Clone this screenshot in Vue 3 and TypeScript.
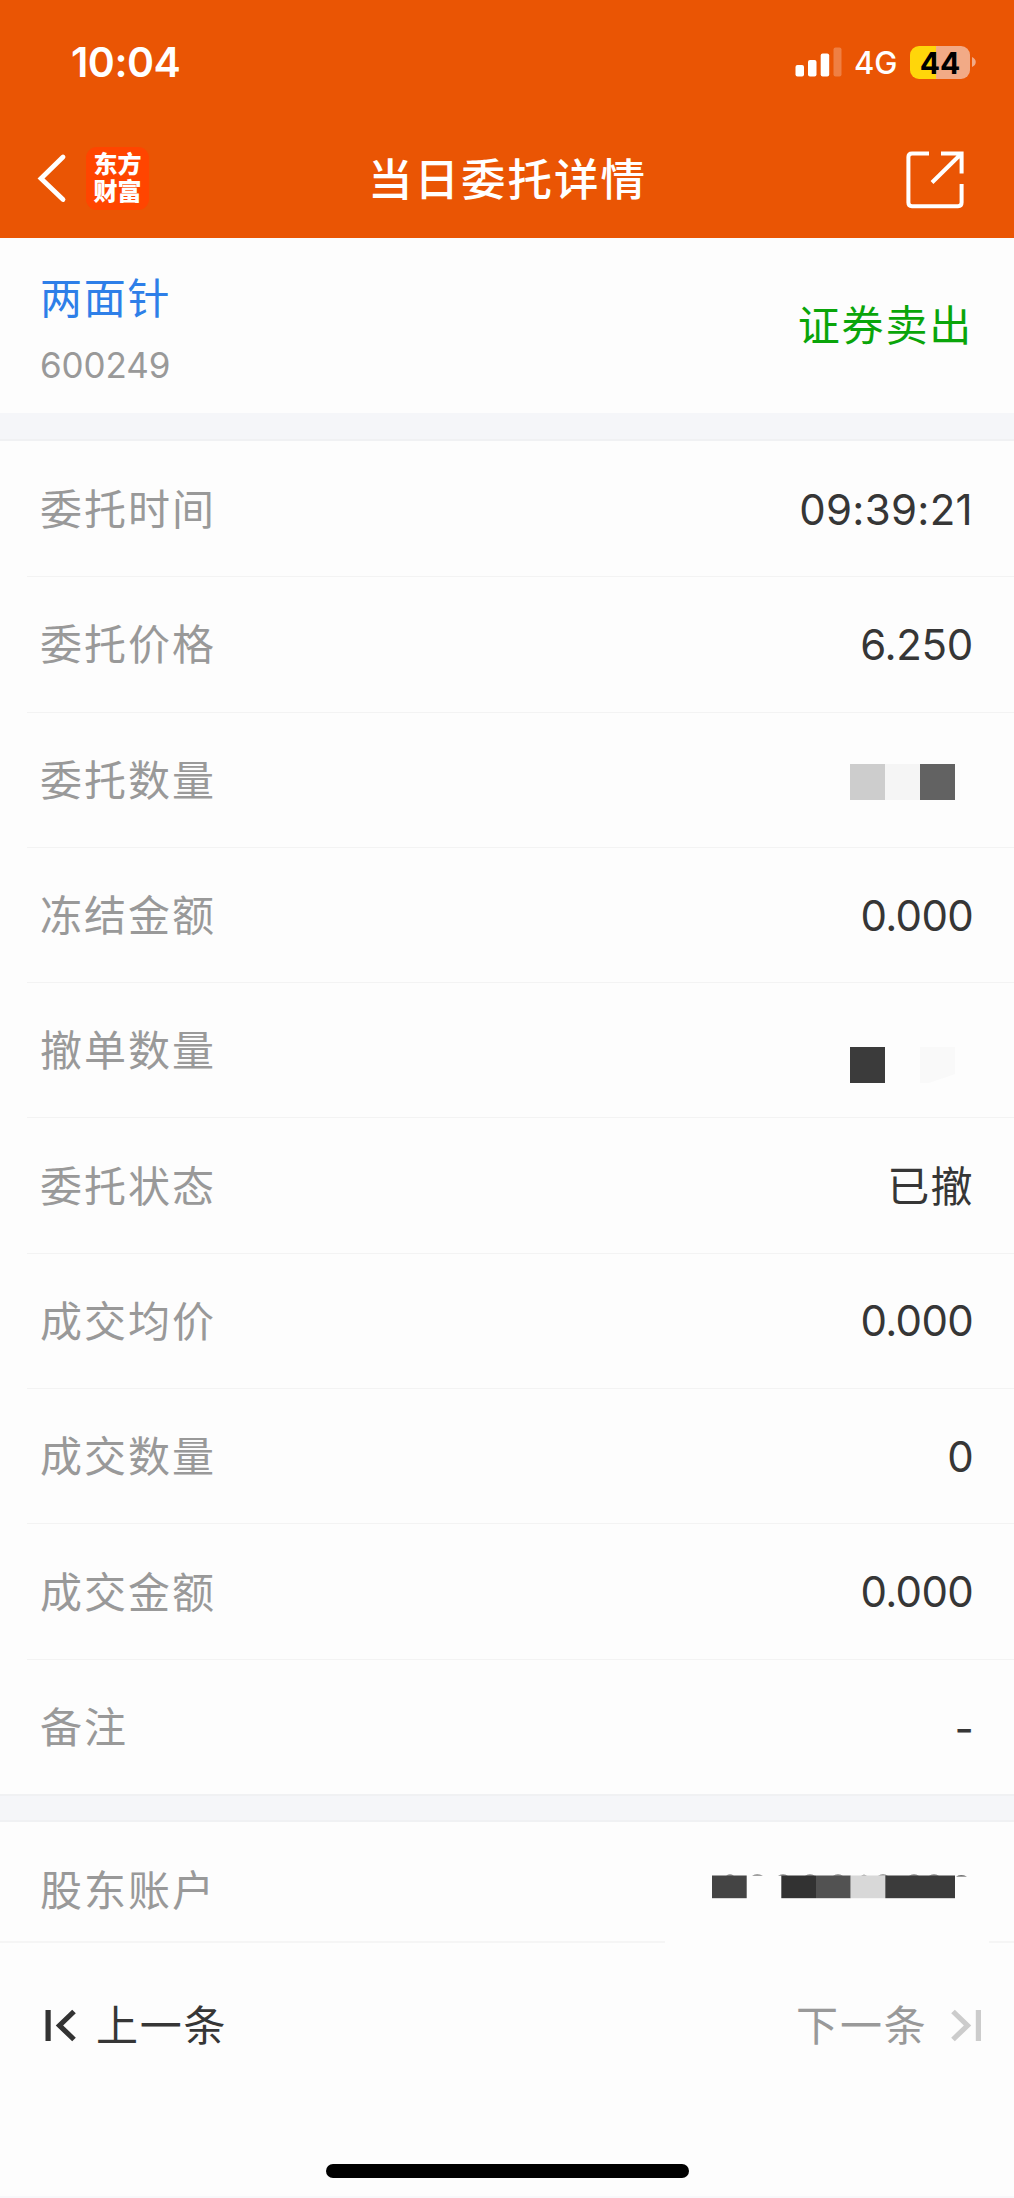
<script setup lang="ts">
interface Row {
  label: string
  value?: string
  kind?: 'time' | 'price' | 'han' | 'dash'
  mask?: 'amount' | 'cancel'
}

const rows: Row[] = [
  { label: '委托时间', value: '09:39:21', kind: 'time' },
  { label: '委托价格', value: '6.250', kind: 'price' },
  { label: '委托数量', mask: 'amount' },
  { label: '冻结金额', value: '0.000' },
  { label: '撤单数量', mask: 'cancel' },
  { label: '委托状态', value: '已撤', kind: 'han' },
  { label: '成交均价', value: '0.000' },
  { label: '成交数量', value: '0' },
  { label: '成交金额', value: '0.000' },
  { label: '备注', value: '-', kind: 'dash' },
]
</script>

<template>
  <div class="page">
    <header class="header">
      <div class="status">
        <span class="clock">10:04</span>
        <div class="status-right">
          <svg class="signal" width="48" height="30" viewBox="0 0 48 30" fill="#fff">
            <rect x="0.5" y="18" width="8.5" height="11.5" rx="2" />
            <rect x="13" y="13" width="8.5" height="16.5" rx="2" />
            <rect x="25.7" y="6.5" width="8.5" height="23" rx="2" />
            <rect x="38.5" y="0.5" width="8" height="29" rx="2" opacity="0.25" />
          </svg>
          <span class="network">4G</span>
          <div class="battery"><span>44</span></div>
          <svg class="nub" width="4" height="10" viewBox="0 0 4 10"><path d="M0 0C5 2 5 8 0 10Z" fill="#f2aa86" /></svg>
        </div>
      </div>
      <nav class="nav">
        <div class="nav-left">
          <svg width="32" height="52" viewBox="0 0 32 52" fill="none" stroke="#fff" stroke-width="4.8" stroke-linecap="round">
            <path d="M26 5L4 26.5L26 47.5" stroke-linejoin="miter" />
          </svg>
          <div class="logo"><span>东方</span><span>财富</span></div>
        </div>
        <h1 class="title">当日委托详情</h1>
        <svg class="share" width="58" height="58" viewBox="0 0 58 58" fill="none" stroke="#fff" stroke-width="4">
          <path d="M23 2.4H6Q2.4 2.4 2.4 6V51.6Q2.4 55.2 6 55.2H52Q55.6 55.2 55.6 51.6V33" />
          <path d="M35 2.4H55.6V22.5M55 3L26 31.5" />
        </svg>
      </nav>
    </header>

    <section class="stock">
      <div class="stock-id">
        <span class="name">两面针</span>
        <span class="code">600249</span>
      </div>
      <span class="side">证券卖出</span>
    </section>
    <div class="gap"></div>

    <section class="rows">
      <div v-for="row in rows" :key="row.label" class="row">
        <span class="label">{{ row.label }}</span>
        <span v-if="row.value" class="value" :class="row.kind">{{ row.value }}</span>
        <svg v-else-if="row.mask === 'amount'" class="mask amount" width="105" height="36" viewBox="0 0 105 36">
          <rect width="35" height="36" fill="#cdcdcd" />
          <rect x="35" width="35" height="36" fill="#f5f5f5" />
          <rect x="70" width="35" height="36" fill="#626262" />
        </svg>
        <svg v-else class="mask cancel" width="105" height="36" viewBox="0 0 105 36">
          <rect width="35" height="36" fill="#3b3b3b" />
          <path d="M70 0H105V27L79 36H70Z" fill="#f9f9f9" />
        </svg>
      </div>
    </section>
    <div class="gap second"></div>

    <section class="account">
      <span class="label">股东账户</span>
      <svg class="mask holder" width="256" height="25" viewBox="0 0 256 25">
        <path d="M14 1.6q4-2 8 0zM40 1.6q5-2 11 0zM66 1.6q5-2 10 0zM93 1.6q5-2 10 0zM121 1.6q5-2 10 0zM149 1.6q3-1.6 6 0zM166 1.6q5-2 10 0zM197 1.6q5-2 10 0zM217 1.6q5-2 10 0zM244 2.4q5-2.4 11 0z" fill="#444" />
        <rect x="0" y="1.5" width="34.7" height="22.7" fill="#444" />
        <rect x="69.3" y="1.5" width="34.7" height="22.7" fill="#323232" />
        <rect x="104" y="1.5" width="34.7" height="22.7" fill="#525252" />
        <rect x="138.7" y="1.5" width="34.7" height="22.7" fill="#d8d8d8" />
        <rect x="173.3" y="1.5" width="69.7" height="22.7" fill="#3b3b3b" />
      </svg>
    </section>

    <footer class="footer">
      <div class="pager">
        <div class="prev">
          <svg width="32" height="33" viewBox="0 0 32 33" fill="none" stroke="#333" stroke-width="5.2">
            <path d="M4.1 1V32M30 2.5L15.5 16.5L30 30.5" />
          </svg>
          <span>上一条</span>
        </div>
        <div class="next">
          <span>下一条</span>
          <svg width="32" height="33" viewBox="0 0 32 33" fill="none" stroke="#ccc" stroke-width="5.2">
            <path d="M28.4 1V32M3 2.5L17.5 16.5L3 30.5" />
          </svg>
        </div>
      </div>
      <div class="home"></div>
    </footer>
  </div>
</template>

<style>
body {
  margin: 0;
  background: #fdfdfd;
}
</style>

<style scoped>
.page {
  width: 1014px;
  height: 2198px;
  overflow: hidden;
  display: flex;
  flex-direction: column;
  background: #fdfdfd;
  color: #363636;
  font-family: Inter, 'Noto Sans CJK SC', sans-serif;
  box-sizing: border-box;
  border-bottom: 2px solid #f8f8fa;
}
.header {
  height: 238px;
  flex: none;
  background: #ea5504;
  color: #fff;
}
.status {
  height: 124px;
  padding: 0 38px 0 71px;
  display: flex;
  align-items: center;
  justify-content: space-between;
}
.clock {
  font-size: 41px;
  font-weight: 600;
  letter-spacing: -0.5px;
  line-height: 50px;
}
.status-right {
  display: flex;
  align-items: center;
}
.network {
  width: 44px;
  margin-left: 11px;
  font-size: 31px;
  font-weight: 500;
  line-height: 36px;
  padding-top: 2px;
}
.battery {
  width: 60px;
  height: 33px;
  margin-left: 12px;
  border-radius: 9px;
  background: linear-gradient(90deg, #ffd60a 26px, #f2aa86 26px);
  color: #000;
  font-size: 30px;
  font-weight: 700;
  line-height: 34px;
  text-align: center;
}
.nub {
  margin-left: 2px;
}
.nav {
  height: 108px;
  padding: 0 50px 0 37px;
  display: grid;
  grid-template-columns: 1fr auto 1fr;
  align-items: center;
}
.nav-left {
  display: flex;
  align-items: center;
  gap: 17px;
}
.logo {
  width: 63px;
  height: 63px;
  border-radius: 11px;
  background: #ff4500;
  display: flex;
  flex-direction: column;
  justify-content: center;
  align-items: center;
  font-size: 24px;
  font-weight: 900;
  line-height: 27px;
}
.title {
  margin: 3px 0 0 14px;
  font-size: 44.5px;
  font-weight: 500;
  letter-spacing: 2px;
  line-height: 60px;
}
.share {
  margin-top: 3px;
  justify-self: end;
}
.stock {
  height: 175px;
  flex: none;
  padding: 0 41px 0 40px;
  display: flex;
  justify-content: space-between;
  align-items: center;
}
.stock-id {
  display: flex;
  flex-direction: column;
  gap: 13px;
  padding-top: 6px;
}
.name {
  color: #2e7fe8;
  font-size: 42px;
  letter-spacing: 1.8px;
  line-height: 60px;
}
.code {
  color: #999;
  font-size: 35px;
  letter-spacing: -0.1px;
  line-height: 46px;
}
.side {
  color: #0aa50a;
  font-size: 42px;
  letter-spacing: 1.8px;
  line-height: 60px;
}
.gap {
  height: 28px;
  flex: none;
  box-sizing: border-box;
  background: #f5f6f9;
  border-bottom: 2px solid #f0f1f3;
}
.second {
  border-top: 2px solid #f0f1f3;
}
.rows {
  height: 1353px;
  flex: none;
  display: flex;
  flex-direction: column;
}
.row {
  flex: 1;
  margin-left: 27px;
  padding: 0 40px 0 13px;
  display: flex;
  align-items: center;
  justify-content: space-between;
  box-shadow: 0 1px 0 #f3f3f3;
}
.row:last-child {
  box-shadow: none;
}
.label {
  color: #999;
  font-size: 42px;
  letter-spacing: 2px;
  line-height: 60px;
}
.row .label {
  padding-top: 3px;
}
.value {
  font-size: 42px;
  line-height: 60px;
  padding: 2px 1px 0 0;
  letter-spacing: -0.7px;
}
.time {
  letter-spacing: 0.3px;
}
.price {
  letter-spacing: -0.3px;
}
.han {
  padding: 4px 0 0;
  letter-spacing: 1.4px;
}
.dash {
  padding-top: 6px;
}
.mask {
  flex: none;
}
.amount {
  margin: 5px 19px 0 0;
}
.cancel {
  margin: 30px 19px 0 0;
}
.account {
  height: 119px;
  flex: none;
  padding: 0 46px 0 40px;
  display: flex;
  align-items: flex-start;
  justify-content: space-between;
}
.account .label {
  margin-top: 39px;
}
.holder {
  margin-top: 51.5px;
}
.footer {
  flex: 1;
  display: flex;
  flex-direction: column;
  align-items: center;
  justify-content: space-between;
  background: linear-gradient(90deg, #f5f5f5 665px, transparent 665px, transparent 989px, #f5f5f5 989px) top / 100% 2px no-repeat;
}
.pager {
  align-self: stretch;
  margin-top: 55px;
  padding: 0 32px 0 44px;
  display: flex;
  justify-content: space-between;
  font-size: 42px;
  letter-spacing: 1.8px;
  line-height: 60px;
}
.pager svg {
  margin-top: -1px;
}
.prev,
.next {
  display: flex;
  align-items: center;
  gap: 20px;
}
.next {
  color: #999;
  gap: 22.5px;
}
.home {
  width: 363px;
  height: 14px;
  margin-bottom: 18px;
  border-radius: 7px;
  background: #000;
}
</style>
